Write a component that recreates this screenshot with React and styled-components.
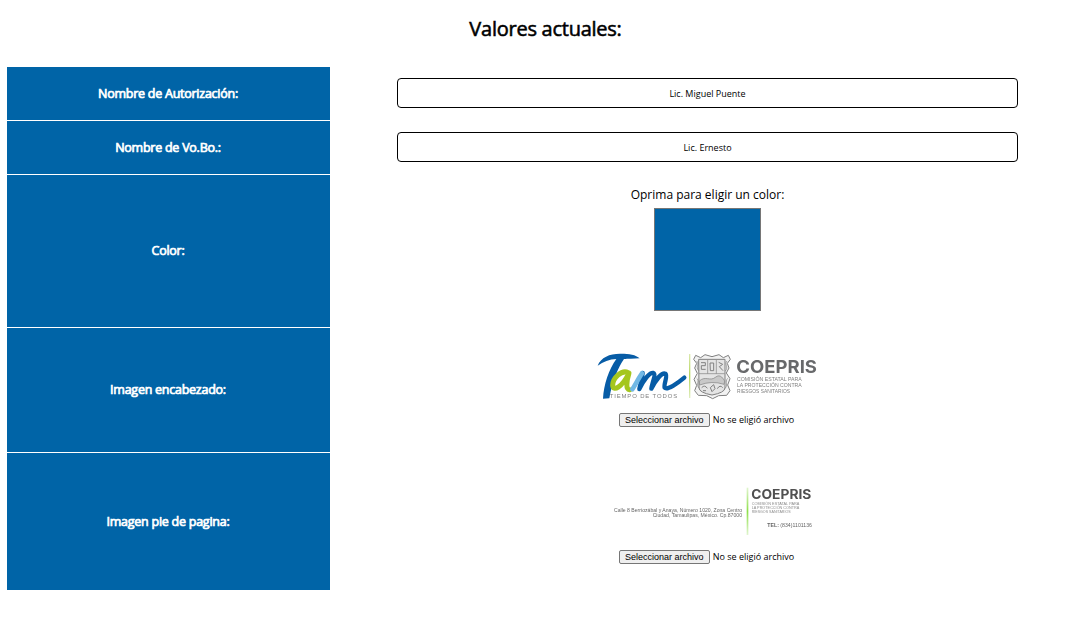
import React from "react";
import styled, { createGlobalStyle } from "styled-components";

const BLUE = "#0064a7";

const GlobalStyle = createGlobalStyle`
  body {
    margin: 0;
    background: #fff;
    color: #000;
    font-family: "Open Sans", "Noto Sans", sans-serif;
  }
`;

const Page = styled.main`
  box-sizing: border-box;
  width: 1089px;
  height: 633px;
  padding: 14px 4px 0 7px;
  overflow: hidden;
`;

const Title = styled.h1`
  margin: 0 0 23px;
  padding-right: 1px;
  height: 30px;
  font-size: 20px;
  line-height: 30px;
  font-weight: 400;
  letter-spacing: -0.25px;
  text-align: center;
  -webkit-text-stroke: 0.55px #000;
`;

const Row = styled.section`
  display: grid;
  grid-template-columns: 323px 1fr;
  height: ${(p) => p.$height}px;
`;

const Label = styled.div`
  box-sizing: border-box;
  display: flex;
  align-items: center;
  justify-content: center;
  padding: 0 1px 1px 0;
  background: ${BLUE};
  color: #fff;
  font-size: 12.5px;
  letter-spacing: -0.25px;
  border-bottom: ${(p) => (p.$last ? "0" : "1px solid #fff")};
  -webkit-text-stroke: 0.7px #fff;
`;

const Cell = styled.div`
  display: flex;
  flex-direction: column;
  align-items: center;
  padding-top: ${(p) => p.$top}px;
`;

const TextInput = styled.input`
  box-sizing: border-box;
  width: 621px;
  height: 30px;
  padding: 0 8px;
  border: 1px solid #000;
  border-radius: 4px;
  background: #fff;
  color: #000;
  font: 9px "Open Sans", sans-serif;
  text-align: center;
`;

const Hint = styled.span`
  height: 18px;
  margin-bottom: 4px;
  font-size: 12px;
  line-height: 18px;
`;

const Swatch = styled.button`
  box-sizing: border-box;
  width: 107px;
  height: 103px;
  padding: 0;
  border: 1px solid #767676;
  background: ${BLUE};
`;

const FileRow = styled.div`
  display: flex;
  align-items: center;
  gap: 3px;
  height: 14px;
  margin-top: ${(p) => p.$top}px;
  padding-right: 2px;
  font-size: 9px;
  line-height: 12px;
  white-space: nowrap;
`;

const FileButton = styled.button`
  box-sizing: border-box;
  width: 91px;
  height: 14px;
  padding: 0;
  border: 1px solid #767676;
  border-radius: 2px;
  background: #efefef;
  color: #000;
  font: 9px/11px "Liberation Sans", Arial, sans-serif;
`;

const Artwork = styled.svg`
  display: block;
  overflow: visible;
  font-family: "Liberation Sans", Arial, sans-serif;
  filter: blur(${(p) => p.$soften}px);
`;

function FilePicker({ top }) {
  return (
    <FileRow $top={top}>
      <FileButton>Seleccionar archivo</FileButton>
      <span>No se eligió archivo</span>
    </FileRow>
  );
}

function HeaderLogo() {
  return (
    <Artwork $soften={0.25} width="235" height="60" viewBox="0 0 705 180">
      <defs>
        <linearGradient id="rule" x1="0" y1="0" x2="0" y2="1">
          <stop offset="0" stopColor="#dbe8ae" />
          <stop offset=".5" stopColor="#b5d65a" />
          <stop offset="1" stopColor="#e0edc0" />
        </linearGradient>
      </defs>
      <path
        d="M23 62C33 36 61 25 94 26C117 26 138 29 149 40C131 42 112 40 102 42C85 67 68 104 58 160L39 161C41 119 57 72 79 42C58 43 40 50 23 62Z"
        fill="#075ca6"
      />
      <g fill="none" strokeLinecap="round" strokeLinejoin="round">
        <path d="M115 83C94 73 68 100 68 121C69 140 95 129 117 84C109 110 107 135 119 134" stroke="#a5c61e" strokeWidth="15" />
        <path
          d="M158 84C156 104 150 120 148 132C160 108 178 82 190 84C199 88 186 114 184 131C197 106 215 82 226 86C235 92 220 117 224 128C231 137 264 114 283 98"
          stroke="#075ca6"
          strokeWidth="13"
        />
        <path d="M127 133C136 119 146 99 156 85" stroke="#71b8e5" strokeWidth="14" />
      </g>
      <text x="59" y="158" fontSize="17" fill="#808080" letterSpacing="2.5" textLength="205" lengthAdjust="spacingAndGlyphs">TIEMPO DE TODOS</text>
      <rect x="297" y="27" width="4" height="132" fill="url(#rule)" />
      <g fill="none" stroke="#808080" strokeWidth="3" strokeLinejoin="round">
        <path
          d="M317 31L332 38L345 29L366 35L387 29L400 38L415 31L421 43L412 55L417 69L409 84L420 101L413 120L420 137L410 151L386 152L368 161L350 152L325 151L314 137L320 121L312 103L322 85L314 69L320 55L311 43Z"
          fill="#f2f2f2"
        />
        <path d="M326 43H405V129Q404 143 366 150Q328 143 327 129Z" fill="#e4e4e4" />
        <path d="M327 86H404M353 45V86M379 45V86" strokeWidth="2" />
        <path d="M328 108C346 91 360 110 376 97S400 103 404 108L402 118Q366 106 329 120Z" fill="#c8c8c8" strokeWidth="2" />
        <path d="M333 53H346V62H334V73H347M360 54H371V77H361ZM386 52L398 58L388 65L399 77" strokeWidth="3" />
        <path d="M335 128Q344 118 352 130M339 137H348M361 128L371 119L375 131L366 140ZM382 131Q390 118 398 128" strokeWidth="3" />
        <path d="M320 48C330 57 315 65 326 77M411 48C402 57 417 66 406 78M320 100C330 106 316 119 328 130M413 100C403 110 417 122 403 132" strokeWidth="2" />
      </g>
      <text x="439" y="85" fontFamily="Inter, sans-serif" fontSize="53" fontWeight="700" fill="#68696b" textLength="242" lengthAdjust="spacingAndGlyphs">COEPRIS</text>
      <g fontSize="14.5" fill="#808080">
        <text x="441" y="108" textLength="194" lengthAdjust="spacingAndGlyphs">COMISIÓN ESTATAL PARA</text>
        <text x="441" y="126" textLength="194" lengthAdjust="spacingAndGlyphs">LA PROTECCIÓN CONTRA</text>
        <text x="441" y="143" textLength="159" lengthAdjust="spacingAndGlyphs">RIESGOS SANITARIOS</text>
      </g>
    </Artwork>
  );
}

function FooterLogo() {
  return (
    <Artwork $soften={0.35} width="205" height="60" viewBox="0 0 615 180">
      <defs>
        <linearGradient id="footerRule" x1="0" y1="0" x2="0" y2="1">
          <stop offset="0" stopColor="#e1f5d0" />
          <stop offset=".5" stopColor="#8fe04a" />
          <stop offset="1" stopColor="#e1f5d0" />
        </linearGradient>
      </defs>
      <g fontSize="15" fill="#666">
        <text x="27" y="95" textLength="384" lengthAdjust="spacingAndGlyphs">Calle 8 Berriozábal y Anaya, Número 1020, Zona Centro</text>
        <text x="143" y="111" textLength="268" lengthAdjust="spacingAndGlyphs">Ciudad, Tamaulipas, México. Cp.87000</text>
      </g>
      <rect x="425" y="23" width="5" height="142" fill="url(#footerRule)" />
      <text x="439" y="56" fontFamily="Inter, sans-serif" fontSize="39" fontWeight="700" fill="#505050" textLength="180" lengthAdjust="spacingAndGlyphs">COEPRIS</text>
      <g fontSize="11" fill="#8c8c8c">
        <text x="440" y="74" textLength="143" lengthAdjust="spacingAndGlyphs">COMISIÓN ESTATAL PARA</text>
        <text x="440" y="87" textLength="143" lengthAdjust="spacingAndGlyphs">LA PROTECCIÓN CONTRA</text>
        <text x="440" y="100" textLength="117" lengthAdjust="spacingAndGlyphs">RIESGOS SANITARIOS</text>
      </g>
      <text x="487" y="142" fontSize="15" fill="#666" textLength="134" lengthAdjust="spacingAndGlyphs">
        <tspan fontWeight="700">TEL:</tspan> (834)1101136
      </text>
    </Artwork>
  );
}

export default function App() {
  return (
    <>
      <GlobalStyle />
      <Page>
        <Title>Valores actuales:</Title>
        <Row $height={54}>
          <Label>Nombre de Autorización:</Label>
          <Cell $top={11}>
            <TextInput defaultValue="Lic. Miguel Puente" aria-label="Nombre de Autorización" />
          </Cell>
        </Row>
        <Row $height={54}>
          <Label>Nombre de Vo.Bo.:</Label>
          <Cell $top={11}>
            <TextInput defaultValue="Lic. Ernesto" aria-label="Nombre de Vo.Bo." />
          </Cell>
        </Row>
        <Row $height={153}>
          <Label>Color:</Label>
          <Cell $top={11}>
            <Hint>Oprima para eligir un color:</Hint>
            <Swatch aria-label="Color" />
          </Cell>
        </Row>
        <Row $height={125}>
          <Label>Imagen encabezado:</Label>
          <Cell $top={17}>
            <HeaderLogo />
            <FilePicker top={8} />
          </Cell>
        </Row>
        <Row $height={137}>
          <Label $last>Imagen pie de pagina:</Label>
          <Cell $top={27}>
            <FooterLogo />
            <FilePicker top={10} />
          </Cell>
        </Row>
      </Page>
    </>
  );
}
